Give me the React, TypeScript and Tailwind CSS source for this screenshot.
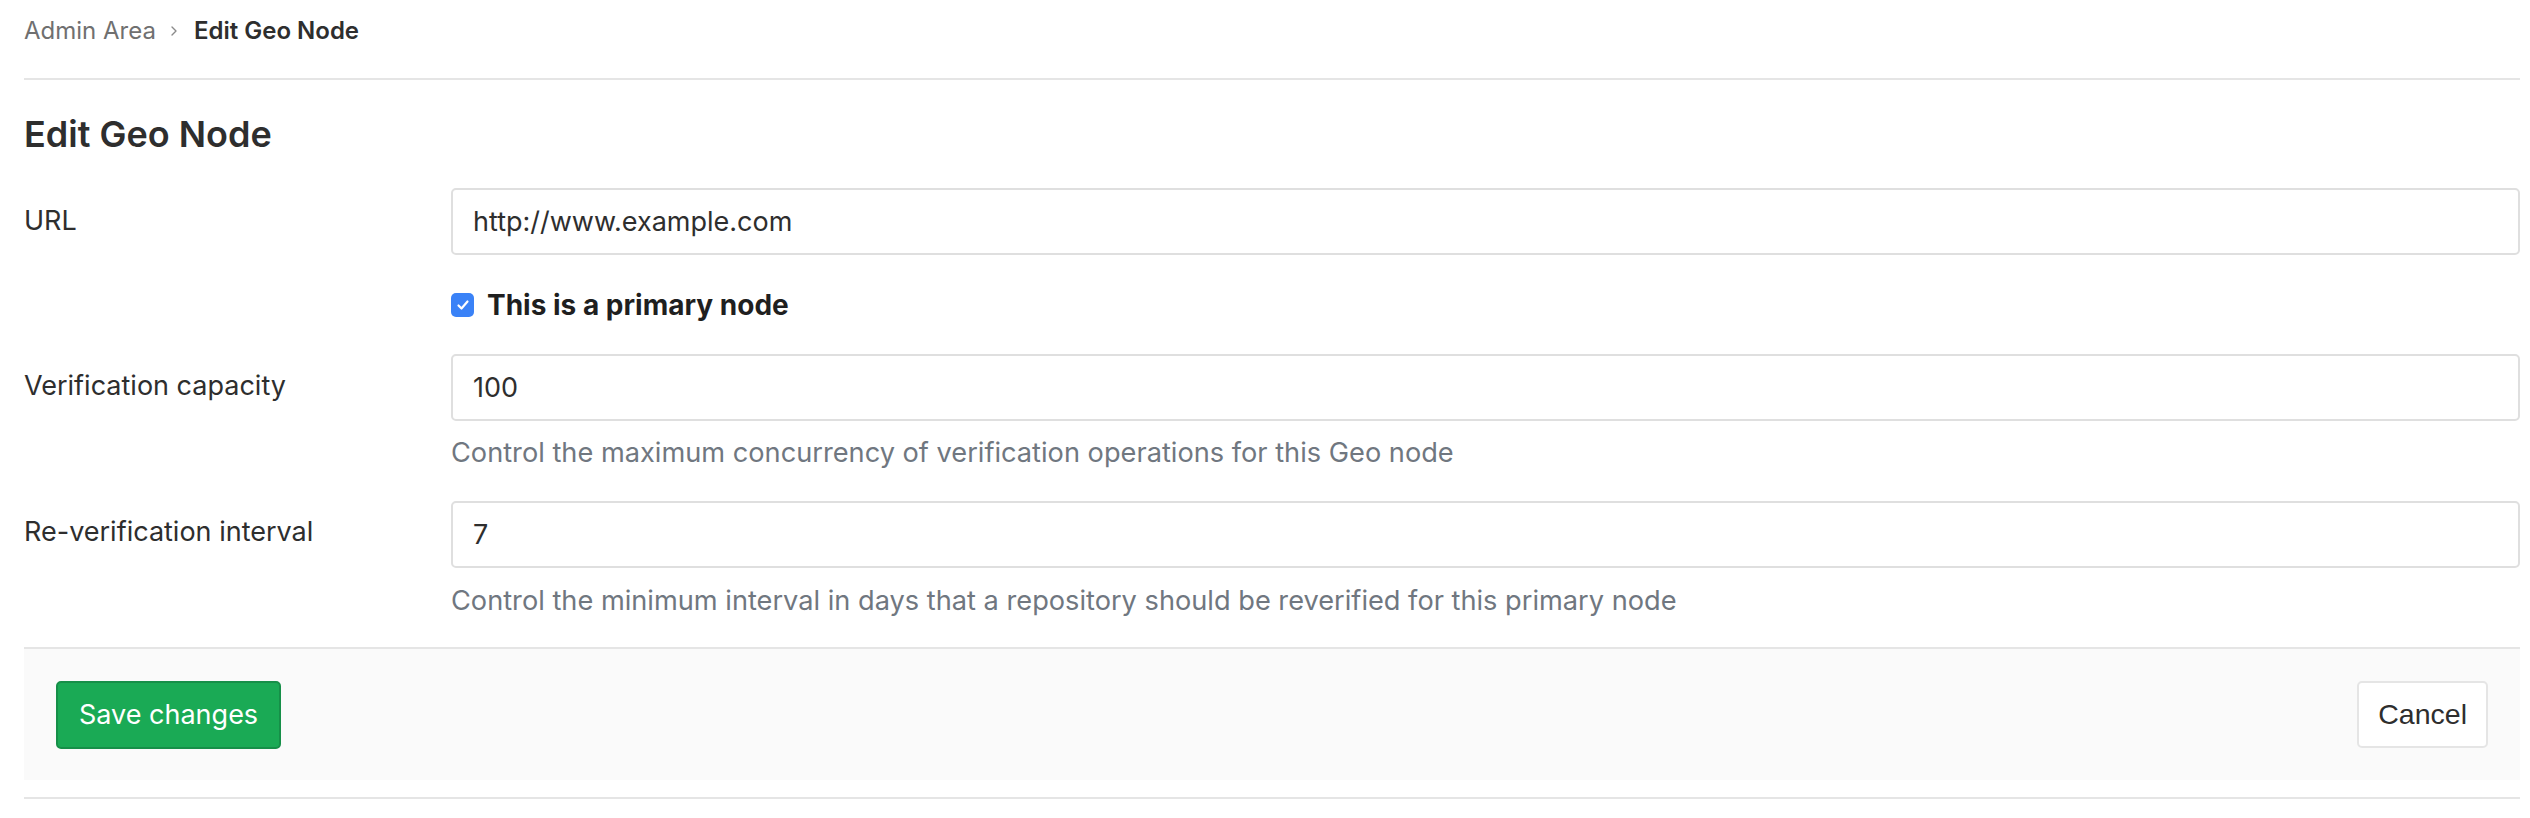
import { ChevronRight } from "lucide-react";

const labelCls = "w-[427px] shrink-0 text-[27px] leading-[30px] text-[#2e2e2e]";
const inputCls =
  "h-[67px] w-full rounded-[5px] border-2 border-[#dfdfdf] bg-white px-[20px] text-[27px] text-[#2e2e2e] outline-none";
const helpCls = "text-[27.2px] leading-[30px] text-[#707780]";

export default function App() {
  return (
    <div className="min-h-screen bg-white pl-[24px] pr-[10px] font-['Inter',sans-serif]">
      {/* breadcrumb */}
      <div className="h-[80px] border-b-2 border-[#e5e5e5]">
        <div className="flex h-[62px] items-center text-[24px]">
          <span className="text-[#707070]">Admin Area</span>
          <ChevronRight className="ml-[10px] mr-[12px] h-[16px] w-[16px] text-[#8a8a8a]" strokeWidth={2} />
          <span className="font-semibold text-[#2e2e2e]">Edit Geo Node</span>
        </div>
      </div>

      <h3 className="mt-[34px] text-[36px] font-semibold leading-[40px] text-[#2e2e2e]">Edit Geo Node</h3>

      <form className="mt-[34px]">
        {/* URL */}
        <div className="flex">
          <label className={`${labelCls} pt-[18px]`}>URL</label>
          <input className={inputCls} defaultValue="http://www.example.com" />
        </div>

        {/* primary checkbox */}
        <div className="mt-[35px] flex">
          <div className="w-[427px] shrink-0" />
          <label className="flex h-[30px] items-center gap-[13px]">
            <span className="flex h-[24px] w-[23px] items-center justify-center rounded-[5px] bg-[#3a82f7]">
              <svg viewBox="0 0 16 16" className="h-[16px] w-[16px]" fill="none">
                <path d="M3.5 8.5l3 3 6-7" stroke="white" strokeWidth="2.2" strokeLinecap="round" strokeLinejoin="round" />
              </svg>
            </span>
            <span className="text-[28px] font-bold leading-[30px] text-[#1f1f1f]">This is a primary node</span>
          </label>
        </div>

        {/* verification capacity */}
        <div className="mt-[34px] flex">
          <label className={`${labelCls} pt-[17px]`}>Verification capacity</label>
          <div className="w-full">
            <input className={inputCls} defaultValue="100" />
            <p className={`${helpCls} mt-[17px]`}>
              Control the maximum concurrency of verification operations for this Geo node
            </p>
          </div>
        </div>

        {/* reverification interval */}
        <div className="mt-[33px] flex">
          <label className={`${labelCls} pt-[16px]`}>Re-verification interval</label>
          <div className="w-full">
            <input className={inputCls} defaultValue="7" />
            <p className={`${helpCls} mt-[18px]`}>
              Control the minimum interval in days that a repository should be reverified for this primary node
            </p>
          </div>
        </div>

        {/* footer */}
        <div className="mt-[31px] flex h-[133px] items-start justify-between border-t-2 border-[#e5e5e5] bg-[#fafafa] px-[32px] pt-[32px]">
          <button
            type="button"
            className="h-[68px] rounded-[5px] border-2 border-[#168f48] bg-[#1aaa55] px-[21px] text-[27px] text-white"
          >
            Save changes
          </button>
          <button
            type="button"
            className="h-[67px] rounded-[5px] border-2 border-[#e5e5e5] bg-white px-[19px] font-['Liberation_Sans',sans-serif] text-[28.5px] text-[#2e2e2e]"
          >
            Cancel
          </button>
        </div>
        <div className="mt-[17px] h-[2px] bg-[#e5e5e5]" />
      </form>
    </div>
  );
}
